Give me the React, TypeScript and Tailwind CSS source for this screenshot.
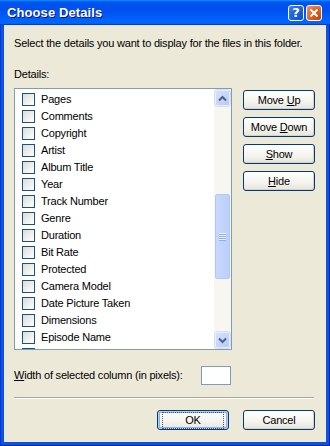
import React from 'react';

const items = [
    'Pages',
    'Comments',
    'Copyright',
    'Artist',
    'Album Title',
    'Year',
    'Track Number',
    'Genre',
    'Duration',
    'Bit Rate',
    'Protected',
    'Camera Model',
    'Date Picture Taken',
    'Dimensions',
    'Episode Name',
];

const XpButton: React.FC<{ children: React.ReactNode; isDefault?: boolean }> = ({ children, isDefault }) => (
    <button
        className={`h-[20px] w-[72px] rounded-[3px] border border-[#003c74] bg-[linear-gradient(180deg,#ffffff,#f4f3ee_60%,#e6e4da)] text-[11px] leading-[13px] text-black flex items-center justify-center whitespace-nowrap ${
            isDefault ? 'shadow-[inset_0_0_0_1px_#b8cdf5,inset_0_0_0_2px_#8fb0ee]' : 'shadow-[inset_-1px_-1px_0_#d6d0c5]'
        }`}
    >
        {isDefault ? (
            <span className="px-[22px] py-[1px] outline outline-1 outline-dotted outline-[#555] leading-[13px]">{children}</span>
        ) : (
            <span>{children}</span>
        )}
    </button>
);

const Checkbox: React.FC = () => (
    <span className="w-[13px] h-[13px] shrink-0 border border-[#1c5180] bg-[linear-gradient(135deg,#dcdcd7,#ffffff)]" />
);

const ScrollArrow: React.FC<{ up?: boolean }> = ({ up }) => (
    <div className="w-[15px] h-[16px] mx-auto rounded-[2px] border border-[#e6edfd] bg-[linear-gradient(135deg,#d5e1fe,#b8cbf8)] shadow-[0_0_0_0.5px_#b5c6ee] flex items-center justify-center">
        <svg width="9" height="7" viewBox="0 0 9 7">
            <path d={up ? 'M1 5.5 L4.5 2 L8 5.5' : 'M1 1.5 L4.5 5 L8 1.5'} fill="none" stroke="#4d6185" strokeWidth="2" />
        </svg>
    </div>
);

export default function App() {
    return (
        <div
            className="w-[330px] h-[446px] flex flex-col bg-[#0855dd] shadow-[inset_1px_0_#0831d9,inset_-1px_0_#001ea0,inset_0_-1px_#001ea0] select-none"
            style={{ fontFamily: '"Liberation Sans", Arial, sans-serif' }}
        >
            {/* title bar */}
            <div className="h-[25px] shrink-0 flex items-center pl-[7px] pr-[8px] bg-[linear-gradient(180deg,#0997ff,#0053ee_8%,#0050ee_40%,#0066ff_88%,#0066ff_93%,#005bff_95%,#003dd7_96%,#003dd7)]">
                <span className="text-white font-bold text-[13px] tracking-[0.1px] [text-shadow:1px_1px_#0f1089]">
                    Choose Details
                </span>
                <div className="ml-auto flex gap-[2px]">
                    <div className="w-[16px] h-[16px] rounded-[3px] border border-white bg-[radial-gradient(circle_at_90%_90%,#0054e9,#2263d5_55%,#4480f5)] flex items-center justify-center">
                        <span className="text-white font-bold text-[13px] leading-none" style={{ fontFamily: '"DejaVu Sans", sans-serif' }}>?</span>
                    </div>
                    <div className="w-[16px] h-[16px] rounded-[3px] border border-white bg-[radial-gradient(circle_at_90%_90%,#cc4600,#dc6527_55%,#f0957a)] flex items-center justify-center">
                        <svg width="10" height="10" viewBox="0 0 10 10">
                            <path d="M1.5 1.5 L8.5 8.5 M8.5 1.5 L1.5 8.5" stroke="#ffffff" strokeWidth="2" />
                        </svg>
                    </div>
                </div>
            </div>

            {/* body */}
            <div className="mx-[4px] mb-[4px] flex-1 bg-[#ece9d8] pl-[10px] pr-[11px] pt-[12px] text-[11px] leading-[13px] tracking-[-0.2px] text-black flex flex-col">
                <p className="whitespace-nowrap">Select the details you want to display for the files in this folder.</p>
                <p className="mt-[18px]">Details:</p>

                <div className="mt-[7px] flex">
                    <div className="w-[218px] h-[262px] border border-[#7f9db9] bg-white flex overflow-hidden">
                        <div className="flex-1 pt-[2px] pl-[7px] overflow-hidden">
                            {items.map((item) => (
                                <div key={item} className="h-[17px] flex items-center gap-[6px] whitespace-nowrap">
                                    <Checkbox />
                                    <span>{item}</span>
                                </div>
                            ))}
                            <div className="h-[17px] flex items-center">
                                <Checkbox />
                            </div>
                        </div>
                        <div className="w-[17px] h-full bg-[#f7f6f0] flex flex-col py-[1px]">
                            <ScrollArrow up />
                            <div className="mt-[88px] w-[15px] h-[85px] mx-auto rounded-[2px] border border-[#b4c8f6] bg-[linear-gradient(90deg,#c9d8fc,#bccffb)] flex flex-col items-center justify-center gap-[1px]">
                                {[0, 1, 2, 3].map((i) => (
                                    <div key={i} className="w-[7px] h-[1px] bg-[#eef3fe] shadow-[0_1px_#8cb0f8]" />
                                ))}
                            </div>
                            <div className="mt-auto">
                                <ScrollArrow />
                            </div>
                        </div>
                    </div>

                    <div className="ml-[11px] mt-[2px] flex flex-col gap-[7px]">
                        <XpButton>
                            Move <span className="underline">U</span>p
                        </XpButton>
                        <XpButton>
                            Move <span className="underline">D</span>own
                        </XpButton>
                        <XpButton>
                            <span className="underline">S</span>how
                        </XpButton>
                        <XpButton>
                            <span className="underline">H</span>ide
                        </XpButton>
                    </div>
                </div>

                <div className="mt-[16px] flex items-center">
                    <span className="w-[187px] whitespace-nowrap">
                        <span className="underline">W</span>idth of selected column (in pixels):
                    </span>
                    <div className="w-[30px] h-[19px] border border-[#7f9db9] bg-white" />
                </div>

                <div className="mt-[12px] h-[2px] w-[300px] border-t border-[#aca899] border-b border-b-white" />

                <div className="mt-[11px] flex justify-end gap-[14px]">
                    <XpButton isDefault>OK</XpButton>
                    <XpButton>Cancel</XpButton>
                </div>
            </div>
        </div>
    );
}
